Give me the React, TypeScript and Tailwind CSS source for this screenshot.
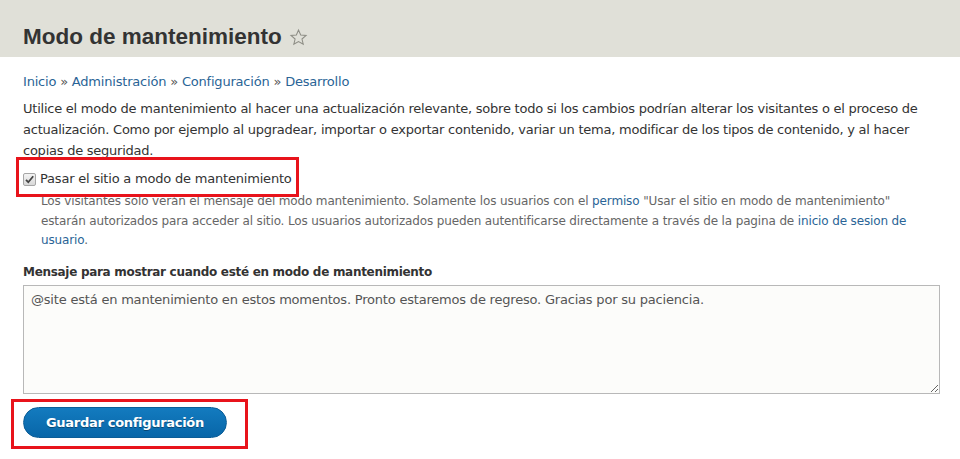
import React, { useState } from 'react';

const font = { fontFamily: '"DejaVu Sans", Verdana, sans-serif' };

export default function App() {
  const [enabled, setEnabled] = useState(true);
  const [message, setMessage] = useState(
    '@site está en mantenimiento en estos momentos. Pronto estaremos de regreso. Gracias por su paciencia.'
  );

  return (
    <div className="w-[960px] h-[459px] bg-white text-[#333] overflow-hidden" style={font}>
      {/* Page title bar */}
      <div className="h-[57px] bg-[#e0e0d8] px-[23px] pt-[22px]">
        <h1
          className="flex items-center gap-[7px] text-[22.5px] font-bold leading-[30px] text-[#333]"
          style={{ fontFamily: '"Liberation Sans", Arial, sans-serif' }}
        >
          Modo de mantenimiento
          <svg viewBox="0 0 24 24" className="w-[19px] h-[19px]" fill="none" stroke="#8d8d85" strokeWidth="1.3">
            <path d="M12 2.5l2.8 6.3 6.8.6-5.2 4.5 1.6 6.7L12 17.1l-5.9 3.5 1.6-6.7-5.2-4.5 6.8-.6z" />
          </svg>
        </h1>
      </div>

      <div className="px-[23px] pt-[16px]">
        {/* Breadcrumb */}
        <nav className="text-[13px] leading-[18px] tracking-[-0.2px] text-[#2a6496]">
          <a href="#">Inicio</a> <span className="text-[#555]">»</span> <a href="#">Administración</a>{' '}
          <span className="text-[#555]">»</span> <a href="#">Configuración</a> <span className="text-[#555]">»</span>{' '}
          <a href="#">Desarrollo</a>
        </nav>

        <p className="mt-[8px] text-[13px] leading-[20.8px] tracking-[-0.24px] text-[#333] pr-[12px]">
          Utilice el modo de mantenimiento al hacer una actualización relevante, sobre todo si los cambios podrían alterar
          los visitantes o el proceso de actualización. Como por ejemplo al upgradear, importar o exportar contenido, variar
          un tema, modificar de los tipos de contenido, y al hacer copias de seguridad.
        </p>

        {/* Checkbox */}
        <div className="relative mt-[8px]">
          <div className="absolute left-[-7px] top-[-12px] w-[283px] h-[40px] border-[3px] border-[#e8131b] pointer-events-none" />
          <label className="flex items-center gap-[4px] text-[13px] leading-[20px] tracking-[-0.2px] text-[#333]">
            <span className="relative w-[13px] h-[13px] shrink-0">
              <input
                type="checkbox"
                checked={enabled}
                onChange={e => setEnabled(e.target.checked)}
                className="peer appearance-none block w-[13px] h-[13px] m-0 rounded-[2px] border border-[#a6a6a6] bg-gradient-to-b from-[#f4f4f4] to-[#d8d8d8]"
              />
              <svg
                viewBox="0 0 13 13"
                className="absolute inset-0 w-[13px] h-[13px] pointer-events-none hidden peer-checked:block"
                fill="none"
                stroke="#444"
                strokeWidth="1.8"
              >
                <path d="M3 6.8l2.3 2.4L10.2 3.2" />
              </svg>
            </span>
            Pasar el sitio a modo de mantenimiento
          </label>
          <p className="ml-[18px] mt-[3px] text-[12px] leading-[19.5px] tracking-[-0.14px] text-[#666]">
            Los visitantes solo verán el mensaje del modo mantenimiento. Solamente los usuarios con el{' '}
            <a href="#" className="text-[#2a6496]">permiso</a> "Usar el sitio en modo de mantenimiento" estarán
            autorizados para acceder al sitio. Los usuarios autorizados pueden autentificarse directamente a través de la
            pagina de <a href="#" className="text-[#2a6496]">inicio de sesion de usuario</a>.
          </p>
        </div>

        {/* Message */}
        <label className="block mt-[12px] text-[12px] font-bold leading-[18px] tracking-[-0.3px] text-[#333]">
          Mensaje para mostrar cuando esté en modo de mantenimiento
        </label>
        <textarea
          value={message}
          onChange={e => setMessage(e.target.value)}
          className="block mt-[4px] w-[917px] h-[109px] px-[7px] py-[4px] bg-[#fcfcfa] border border-[#b8b8b8] text-[13px] leading-[20px] tracking-[-0.2px] text-[#555] outline-none resize-y"
          style={font}
        />

        {/* Submit */}
        <div className="relative mt-[13px] w-fit">
          <div className="absolute left-[-12px] top-[-8px] w-[237px] h-[50px] border-[3px] border-[#e8131b] pointer-events-none" />
          <button className="block h-[31px] px-[22px] rounded-full bg-gradient-to-b from-[#137bbf] to-[#0866a8] border border-[#0b5d97] text-white text-[13px] font-bold tracking-[-0.3px] [text-shadow:0_1px_0_rgba(0,0,0,0.35)]">
            Guardar configuración
          </button>
        </div>
      </div>
    </div>
  );
}
